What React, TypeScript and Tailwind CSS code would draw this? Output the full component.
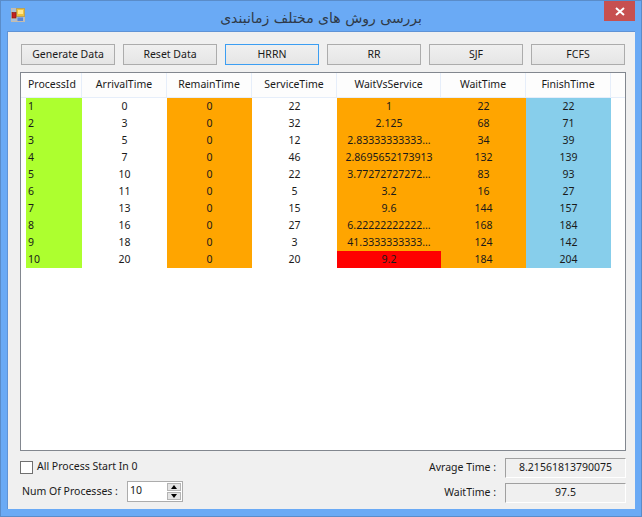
import React from 'react';

const font = { fontFamily: '"Noto Sans", sans-serif' };

const columns = [
  { label: 'ProcessId', width: 'w-[56px]', left: true },
  { label: 'ArrivalTime', width: 'w-[85px]' },
  { label: 'RemainTime', width: 'w-[85px]' },
  { label: 'ServiceTime', width: 'w-[85px]' },
  { label: 'WaitVsService', width: 'w-[104px]' },
  { label: 'WaitTime', width: 'w-[85px]' },
  { label: 'FinishTime', width: 'w-[85px]' },
];

const rows = [
  ['1', '0', '0', '22', '1', '22', '22'],
  ['2', '3', '0', '32', '2.125', '68', '71'],
  ['3', '5', '0', '12', '2.83333333333...', '34', '39'],
  ['4', '7', '0', '46', '2.8695652173913', '132', '139'],
  ['5', '10', '0', '22', '3.77272727272...', '83', '93'],
  ['6', '11', '0', '5', '3.2', '16', '27'],
  ['7', '13', '0', '15', '9.6', '144', '157'],
  ['8', '16', '0', '27', '6.22222222222...', '168', '184'],
  ['9', '18', '0', '3', '41.3333333333...', '124', '142'],
  ['10', '20', '0', '20', '9.2', '184', '204'],
];

const cellBg = ['bg-[#adff2f]', 'bg-white', 'bg-[#ffa500]', 'bg-white', 'bg-[#ffa500]', 'bg-[#ffa500]', 'bg-[#87ceeb]'];

const buttons = ['Generate Data', 'Reset Data', 'HRRN', 'RR', 'SJF', 'FCFS'];

function AppIcon() {
  return (
    <svg width="14" height="14" viewBox="0 0 14 14" className="shrink-0">
      <rect x="0.5" y="0.5" width="13" height="13" fill="#a9bfd8" stroke="#c4bcae" />
      <path d="M0.5 4.5H5M0.5 10.5H5M5 0.5V13.5" stroke="#c4bcae" />
      <rect x="5.5" y="0.5" width="8" height="8" fill="#f0c23c" stroke="#b9a25a" />
      <rect x="7" y="2" width="5" height="4" fill="#ffe78c" />
      <rect x="1" y="4.5" width="4" height="5.5" fill="#c42020" stroke="#7d1414" strokeWidth="0.6" />
      <rect x="6.5" y="9.5" width="5.5" height="3.5" fill="#5a86d8" />
    </svg>
  );
}

function Spinner() {
  return (
    <div className="flex flex-col w-[14px] h-[17px] ml-auto gap-px">
      <div className="flex-1 bg-[#e4e4e4] border border-[#b4b4b4] flex items-center justify-center">
        <div className="w-0 h-0 border-x-[3px] border-x-transparent border-b-[4px] border-b-black" />
      </div>
      <div className="flex-1 bg-[#e4e4e4] border border-[#b4b4b4] flex items-center justify-center">
        <div className="w-0 h-0 border-x-[3px] border-x-transparent border-t-[4px] border-t-black" />
      </div>
    </div>
  );
}

export default function App() {
  return (
    <div className="w-[642px] h-[517px] flex flex-col bg-[#6aaaf5] border border-[#5a8cc9] text-[10.5px] text-[#1a1a1a] overflow-hidden" style={font}>
      <div className="h-[30px] shrink-0 flex items-start relative">
        <div className="mt-[7px] ml-[10px]">
          <AppIcon />
        </div>
        <div dir="rtl" className="absolute left-[220px] top-[7px] w-[201px] text-center text-[14px] text-[#2f3a48] whitespace-nowrap" style={{ fontFamily: '"DejaVu Sans", sans-serif' }}>
          بررسی روش های مختلف زمانبندی
        </div>
        <div className="ml-auto mr-[6px] w-[31px] h-[20px] bg-[#c75050] flex items-center justify-center">
          <svg width="10" height="9" viewBox="0 0 10 9">
            <path d="M1 1 L9 8 M9 1 L1 8" stroke="#fff" strokeWidth="2" />
          </svg>
        </div>
      </div>

      <div className="ml-[6px] mr-[6px] mb-[7px] flex-1 flex flex-col bg-[#f0f0f0] border-t border-l border-[#5f93d6] pl-[12px] pr-[7px]">
        <div className="flex gap-[8px] pt-[12px] pl-px">
          {buttons.map((b) => (
            <div
              key={b}
              className={`w-[94px] h-[21px] shrink-0 flex items-center justify-center border bg-gradient-to-b from-[#f0f0f0] to-[#e5e5e5] ${b === 'HRRN' ? 'border-[#3c9ef2]' : 'border-[#acacac]'}`}
            >
              {b}
            </div>
          ))}
        </div>

        <div className="mt-[7px] w-[606px] h-[379px] border border-[#82878f] bg-white flex flex-col">
          <div className="h-[25px] flex pl-[5px] bg-[#fdfdfd] border-b border-[#e6eefa]">
            {columns.map((c) => (
              <div
                key={c.label}
                className={`${c.width} flex items-center border-r border-[#e6eefa] ${c.left ? 'pl-[2px]' : 'justify-center'}`}
              >
                {c.label}
              </div>
            ))}
          </div>
          {rows.map((row) => (
            <div key={row[0]} className="h-[17px] flex pl-[5px]">
              {row.map((val, i) => (
                <div
                  key={i}
                  className={`${columns[i].width} flex items-center whitespace-nowrap pt-px ${i === 0 ? 'pl-[2px]' : 'justify-center'} ${i === 4 && row[0] === '10' ? 'bg-[#ff0000]' : cellBg[i]}`}
                >
                  {val}
                </div>
              ))}
            </div>
          ))}
        </div>

        <div className="flex mt-[6px] w-[606px]">
          <div className="flex flex-col">
            <div className="flex items-center gap-[4px] h-[20px]">
              <div className="w-[13px] h-[13px] border border-[#707070] bg-white" />
              <span className="whitespace-nowrap">All Process Start In 0</span>
            </div>
            <div className="flex items-center mt-[4px] ml-[2px]">
              <span className="w-[105px] whitespace-nowrap">Num Of Processes :</span>
              <div className="w-[56px] h-[21px] border border-[#acacac] bg-white flex items-center pl-[2px] pr-px">
                <span className="-mt-[2px]">10</span>
                <Spinner />
              </div>
            </div>
          </div>
          <div className="ml-auto flex flex-col gap-[5px] mt-px">
            <div className="flex items-center justify-end">
              <span className="whitespace-nowrap">Avrage Time :</span>
              <div className="ml-[9px] w-[121px] h-[20px] flex items-center justify-center bg-[#f0f0f0] border-t border-l border-[#a0a0a0] border-r border-b border-r-white border-b-white">
                8.21561813790075
              </div>
            </div>
            <div className="flex items-center justify-end">
              <span className="whitespace-nowrap">WaitTime :</span>
              <div className="ml-[9px] w-[121px] h-[20px] flex items-center justify-center bg-[#f0f0f0] border-t border-l border-[#a0a0a0] border-r border-b border-r-white border-b-white">
                97.5
              </div>
            </div>
          </div>
        </div>
      </div>
    </div>
  );
}
